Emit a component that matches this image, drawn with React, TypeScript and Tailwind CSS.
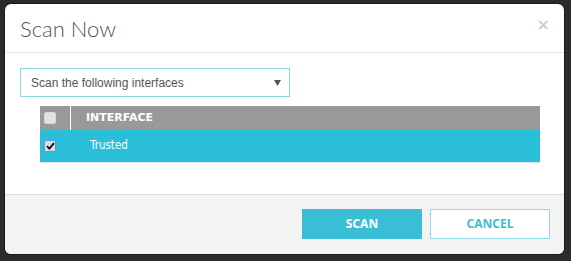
import React from "react";

export default function App() {
  return (
    <div className="w-[571px] h-[261px] bg-[#2b2b2b] pt-[4px] pl-[5px] overflow-hidden">
      <div className="w-[559px] h-[250px] bg-white rounded-[6px] overflow-hidden flex flex-col shadow-[0_0_0_1px_#1a1a1a]">
        {/* header */}
        <div className="h-[49px] border-b border-[#e5e5e5] flex items-start justify-between pl-[15px] pr-[14px]">
          <div className="mt-[10px] text-[22px] leading-[30px] font-light text-[#555]" style={{ fontFamily: "Lato, sans-serif" }}>
            Scan Now
          </div>
          <div className="mt-[13px] text-[#cfcfcf] text-[16px] leading-[16px] font-bold" style={{ fontFamily: "'DejaVu Sans', sans-serif" }}>
            ×
          </div>
        </div>
        {/* body */}
        <div className="h-[141px] pt-[15px] pl-[15px]">
          <div className="w-[270px] h-[29px] border border-[#8ed8e8] flex items-center justify-between pl-[10px] pr-[8px]">
            <span className="text-[12px] text-[#555]" style={{ fontFamily: "'Liberation Sans', Arial, sans-serif" }}>
              Scan the following interfaces
            </span>
            <svg width="7" height="6" viewBox="0 0 7 6">
              <path d="M0 0 H7 L3.5 6 Z" fill="#555" />
            </svg>
          </div>
          <div className="ml-[20px] mt-[9px] w-[500px] border-b border-[#dde7ea]">
            <div className="h-[24px] bg-[#999999] flex items-center">
              <div className="w-[31px] h-full flex items-center pl-[4px] border-r border-white">
                <div className="w-[12px] h-[12px] rounded-[2px] bg-[#e2e2e2] border border-[#d6d6d6]" />
              </div>
              <div className="pl-[15px] text-[11px] font-bold text-white" style={{ fontFamily: "'DejaVu Sans', Verdana, sans-serif" }}>
                INTERFACE
              </div>
            </div>
            <div className="h-[32px] bg-[#2bbed9] flex items-center">
              <div className="w-[32px] h-full flex items-center pl-[4px]">
                <div className="w-[12px] h-[12px] rounded-[2px] bg-[#dcdcdc] border border-[#5b9be0] flex items-center justify-center">
                  <svg width="9" height="8" viewBox="0 0 9 8">
                    <path d="M1 4.2 L3.4 6.6 L8 1.2" stroke="#111" strokeWidth="1.8" fill="none" />
                  </svg>
                </div>
              </div>
              <div className="pl-[18px] text-[11.5px] text-white" style={{ fontFamily: "'DejaVu Sans Condensed', 'DejaVu Sans', sans-serif" }}>
                Trusted
              </div>
            </div>
          </div>
        </div>
        {/* footer */}
        <div className="flex-1 bg-[#f3f3f3] border-t border-[#dcdcdc] flex justify-end items-start pt-[14px] pr-[14px] gap-[8px]">
          <button className="w-[120px] h-[30px] bg-[#3abed6] text-white text-[12px] font-bold" style={{ fontFamily: "'Open Sans', sans-serif" }}>
            SCAN
          </button>
          <button className="w-[120px] h-[30px] bg-white border border-[#92d9ea] text-[#3abed6] text-[12px] font-bold" style={{ fontFamily: "'Open Sans', sans-serif" }}>
            CANCEL
          </button>
        </div>
      </div>
    </div>
  );
}
